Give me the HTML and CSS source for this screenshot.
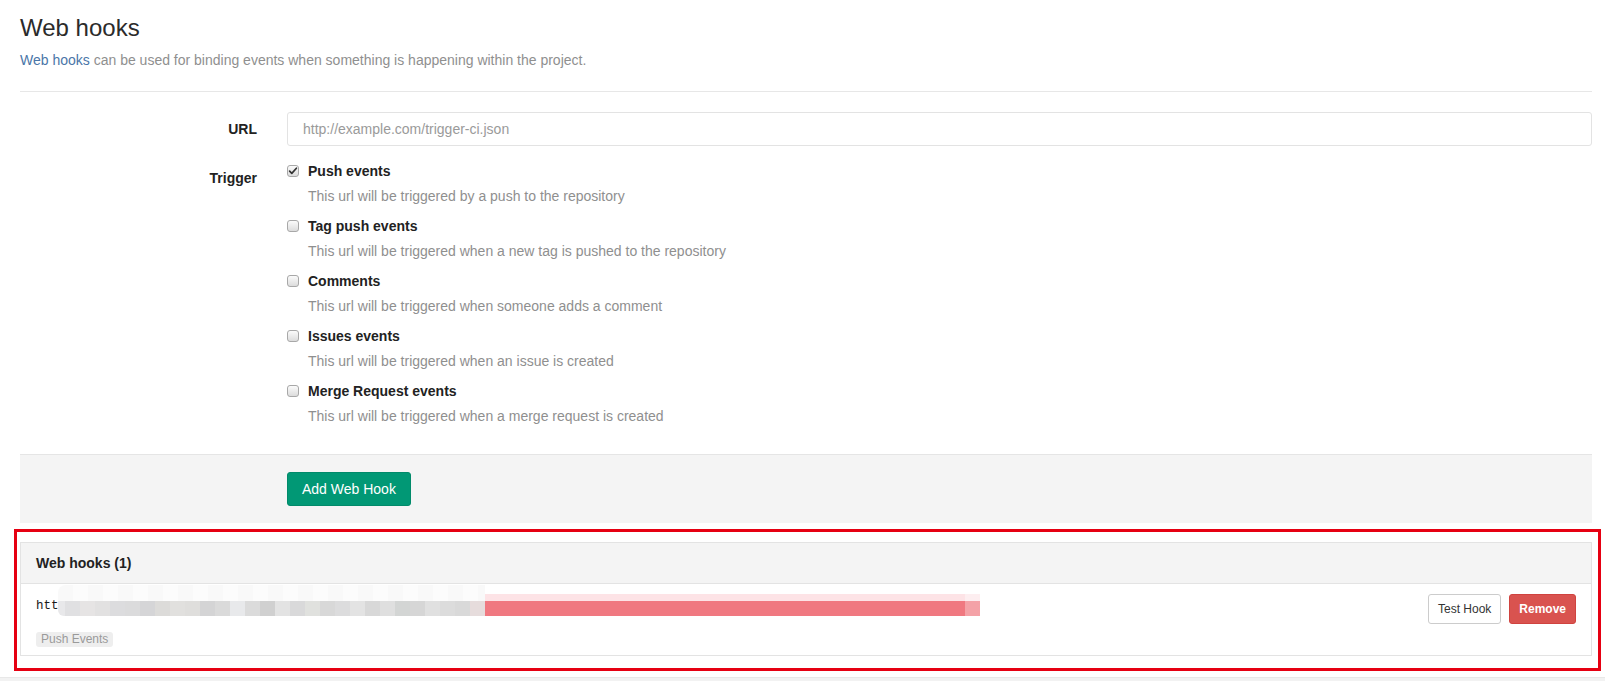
FILE: index.html
```html
<!DOCTYPE html>
<html lang="en">
<head>
<meta charset="utf-8">
<title>Web hooks</title>
<link rel="stylesheet" href="styles.css">
</head>
<body>
<div class="page">
  <h3 class="page-title">Web hooks</h3>
  <p class="lead"><a href="#" class="link">Web hooks</a> can be used for binding events when something is happening within the project.</p>
  <hr class="divider">
  <form class="hook-form">
    <div class="form-row">
      <label class="control-label">URL</label>
      <div class="controls"><input class="text-input" type="text" placeholder="http://example.com/trigger-ci.json"></div>
    </div>
    <div class="form-row">
      <label class="control-label">Trigger</label>
      <div class="controls">
        <div class="trigger-item">
          <label class="cb-label"><span class="cb"><svg class="check" viewBox="0 0 12 12" width="12" height="12"><path d="M2.6 6.2 L4.8 8.4 L9.4 3.2" fill="none" stroke="#333" stroke-width="1.7" stroke-linecap="round" stroke-linejoin="round"/></svg></span>Push events</label>
          <p class="hint">This url will be triggered by a push to the repository</p>
        </div>
        <div class="trigger-item">
          <label class="cb-label"><span class="cb"></span>Tag push events</label>
          <p class="hint">This url will be triggered when a new tag is pushed to the repository</p>
        </div>
        <div class="trigger-item">
          <label class="cb-label"><span class="cb"></span>Comments</label>
          <p class="hint">This url will be triggered when someone adds a comment</p>
        </div>
        <div class="trigger-item">
          <label class="cb-label"><span class="cb"></span>Issues events</label>
          <p class="hint">This url will be triggered when an issue is created</p>
        </div>
        <div class="trigger-item">
          <label class="cb-label"><span class="cb"></span>Merge Request events</label>
          <p class="hint">This url will be triggered when a merge request is created</p>
        </div>
      </div>
    </div>
    <div class="form-actions"><button type="button" class="btn btn-create">Add Web Hook</button></div>
  </form>
  <div class="annotated">
    <div class="panel">
      <div class="panel-heading">Web hooks (1)</div>
      <div class="hook-row">
        <div class="hook-info">
          <div class="hook-url"><code class="url-text">htt</code><span class="redact"></span></div>
          <div class="hook-events"><span class="event-label">Push Events</span></div>
        </div>
        <div class="hook-actions">
          <button type="button" class="btn btn-small btn-default">Test Hook</button>
          <button type="button" class="btn btn-small btn-remove">Remove</button>
        </div>
      </div>
    </div>
    <div class="annotation-frame"></div>
  </div>
</div>
<div class="page-footer"></div>
</body>
</html>
```
FILE: styles.css
```css
html, body {
  margin: 0;
  padding: 0;
  background: #fff;
}
body {
  font-family: "Liberation Sans", Arial, sans-serif;
  font-size: 14px;
  line-height: 20px;
  color: #333;
  overflow: hidden;
}
.page {
  padding: 15px 13px 0 20px;
}
.page-title {
  margin: 0;
  font-size: 24px;
  line-height: 26px;
  font-weight: normal;
  color: #2b2b2b;
}
.lead {
  margin: 9px 0 0;
  color: #8f8f8f;
}
.link {
  color: #4a76a8;
  text-decoration: none;
}
.divider {
  margin: 21px 0 0;
  border: 0;
  border-top: 1px solid #e7e7e7;
  height: 0;
}
.hook-form {
  margin-top: 20px;
}
.form-row {
  display: grid;
  grid-template-columns: 237px 1fr;
  column-gap: 30px;
  margin-bottom: 15px;
}
.control-label {
  padding-top: 7px;
  text-align: right;
  font-weight: bold;
  color: #222;
}
.text-input {
  box-sizing: border-box;
  display: block;
  width: 100%;
  height: 34px;
  margin: 0;
  padding: 6px 15px;
  border: 1px solid #e3e3e3;
  border-radius: 3px;
  font-family: "Liberation Sans", Arial, sans-serif;
  font-size: 14px;
  color: #333;
  background: #fff;
  outline: none;
}
.text-input::placeholder {
  color: #9a9a9a;
}
.trigger-item {
  margin-bottom: 10px;
}
.trigger-item:last-child {
  margin-bottom: 0;
}
.cb-label {
  display: flex;
  align-items: center;
  font-weight: bold;
  color: #222;
}
.cb {
  box-sizing: border-box;
  width: 12px;
  height: 12px;
  margin-right: 9px;
  border: 1px solid #a8a8a8;
  border-radius: 3px;
  background: linear-gradient(#fbfbfb, #dcdcdc);
  position: relative;
  flex: none;
}
.check {
  position: absolute;
  left: -1px;
  top: -1px;
}
.hint {
  margin: 5px 0 0 21px;
  color: #8f8f8f;
}
.form-actions {
  margin-top: 28px;
  padding: 17px 0 17px 267px;
  background: #f4f4f4;
  border-top: 1px solid #e5e5e5;
}
.btn {
  box-sizing: border-box;
  font-family: "Liberation Sans", Arial, sans-serif;
  border-radius: 3px;
  cursor: pointer;
  margin: 0;
}
.btn-create {
  height: 34px;
  padding: 0 14px;
  font-size: 14px;
  color: #fff;
  background: #019875;
  border: 1px solid #018a6a;
}
.annotated {
  position: relative;
  margin-top: 19px;
}
.panel {
  border: 1px solid #e3e3e3;
  background: #fff;
}
.panel-heading {
  height: 40px;
  line-height: 40px;
  padding: 0 15px;
  background: #f4f4f4;
  border-bottom: 1px solid #e3e3e3;
  font-weight: bold;
  color: #222;
}
.hook-row {
  display: flex;
  justify-content: space-between;
  align-items: flex-start;
  padding: 10px 15px 12px;
}
.hook-url {
  position: relative;
  height: 20px;
}
.url-text {
  font-family: "Liberation Mono", "DejaVu Sans Mono", monospace;
  font-size: 12.5px;
  color: #1a1a1a;
}
.redact {
  position: absolute;
  left: 22px;
  top: -9px;
  width: 922px;
  height: 31px;
  border-radius: 8px 0 0 6px;
  background:
    linear-gradient(to right, transparent 0 427px, #fde3e6 427px 907px, #fdeef0 907px 922px) left 9px / 922px 7px no-repeat,
    repeating-linear-gradient(to right, #f9f9f9 0 15px, #fcfcfc 15px 30px) left 0 / 427px 16px no-repeat,
    linear-gradient(to right,
      #e8e8ea 0 7px,
      #e0e0e2 7px 22px, #e6e4e4 22px 37px, #e2e1e1 37px 52px, #dcdcde 52px 67px,
      #dbdbdc 67px 82px, #d5d5d7 82px 97px, #dcdbd9 97px 112px, #e1e0de 112px 127px,
      #dfdedc 127px 142px, #d4d4d5 142px 157px, #dadada 157px 172px, #e8e9eb 172px 187px,
      #dbdbdb 187px 202px, #d0d0d0 202px 217px, #e3e3e3 217px 232px, #d9d9da 232px 247px,
      #e0e1de 247px 262px, #d8d8d8 262px 277px, #dcdcdd 277px 292px, #e3e3e3 292px 307px,
      #d8d8d8 307px 322px, #dfdfdf 322px 337px, #d3d5d4 337px 352px, #d6d6d6 352px 367px,
      #e0e0e0 367px 382px, #dcdcdc 382px 397px, #d9d9d9 397px 412px, #e6dcdc 412px 427px,
      #f07880 427px 907px, #f4a2a7 907px 922px) left bottom / 922px 15px no-repeat;
}
.hook-events {
  margin-top: 14px;
  height: 15px;
}
.event-label {
  display: inline-block;
  height: 15px;
  line-height: 15px;
  padding: 0 5px;
  font-size: 12px;
  color: #9a9a9a;
  background: #eee;
  border-radius: 3px;
}
.hook-actions {
  display: flex;
  gap: 8px;
}
.btn-small {
  height: 30px;
  padding: 0 9px;
  font-size: 12px;
}
.btn-default {
  color: #333;
  background: #fff;
  border: 1px solid #ccc;
}
.btn-remove {
  font-weight: bold;
  color: #fff;
  background: #d9534f;
  border: 1px solid #d0433f;
}
.annotation-frame {
  position: absolute;
  top: -13px;
  left: -6px;
  right: -9px;
  bottom: -15px;
  border: 3px solid #e60012;
  pointer-events: none;
}
.page-footer {
  margin-top: 21px;
  height: 10px;
  background: #f2f2f2;
  border-top: 1px solid #e8e8e8;
}
```
